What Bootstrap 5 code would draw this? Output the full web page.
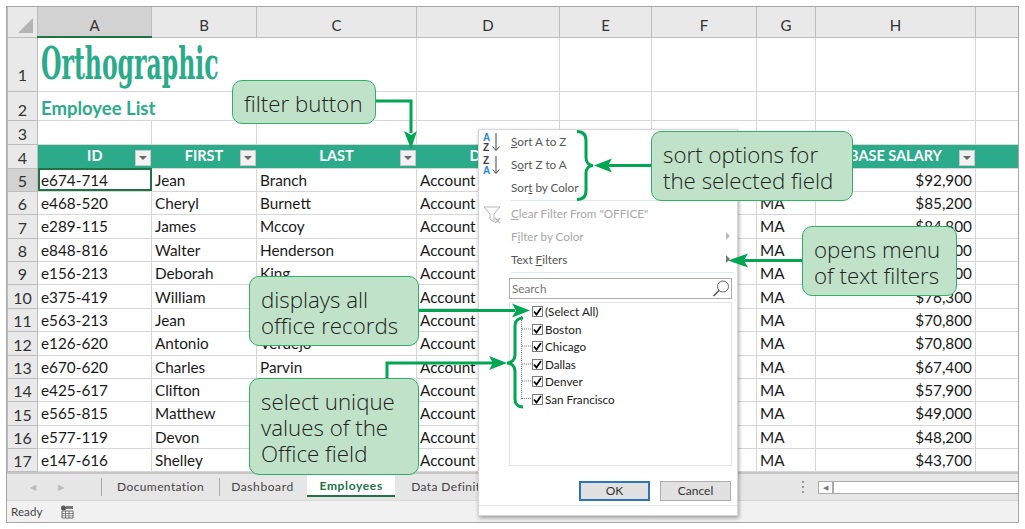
<!DOCTYPE html>
<html lang="en">
<head>
    <meta charset="UTF-8">
    <title>Employee List</title>
    <link href="https://cdn.jsdelivr.net/npm/bootstrap@5.3.0/dist/css/bootstrap.min.css" rel="stylesheet">
    <style>
        body { background: #fff; overflow: hidden; }
        .stage { width: 1025px; height: 529px; padding: 6px; font-family: Lato, "Open Sans", sans-serif; }
        .xl-frame { width: 1013px; height: 517px; border: 1px solid #a6a6a6; }
        .sheet-wrap { height: 465px; }
        .sheet { table-layout: fixed; width: 1011px; border-collapse: collapse; font-size: 15.3px; color: #1a1a1a; }
        .sheet td, .sheet th { border: 1px solid #d6d6d6; padding: 0 3px; overflow: hidden; white-space: nowrap; font-weight: 400; }
        .col-head th { height: 30px; background: #e9e9e9; text-align: center; color: #333; border-color: #bdbdbd; border-top: 0; font-size: 15px; padding-top: 6px; line-height: 20px; }
        .col-head th.on { background: #d2d2d2; border-bottom: 2px solid #217346; }
        .rh { background: #e9e9e9 !important; text-align: center !important; border-color: #bdbdbd !important; color: #333; font-size: 16px; padding: 0 !important; vertical-align: bottom; line-height: 20px; }
        .rh.on { background: #d2d2d2 !important; }
        .corner { position: relative; }
        .corner::after { content: ""; position: absolute; right: 4px; bottom: 4px; border-style: solid; border-width: 0 0 15px 15px; border-color: transparent transparent #b4b4b4 transparent; }
        .r1 td { height: 54px; }
        .r1 td.rh { padding-bottom: 6px !important; }
        .r2 td { height: 29px; }
        .r3 td { height: 24px; }
        .r4 td { height: 24px; background: #2bab8a; color: #fff; font-weight: 700; font-size: 14.5px; text-align: center; border: 0; border-top: 1px solid #f4a46a; position: relative; line-height: 20px; }
        .r4 td.rh { color: #333; font-weight: 400; font-size: 16px; border: 1px solid #bdbdbd; }
        .rw td { height: 23.38px; line-height: 20px; }
        .sel-cell { outline: 2px solid #217346; outline-offset: -2px; }
        .title-big { display: inline-block; font-family: "DejaVu Serif", serif; font-weight: 700; font-size: 44px; line-height: 50px; color: #2bab8a; transform: scaleX(.535); transform-origin: left center; }
        .sheet td.title-sub { font-weight: 700; font-size: 18.5px; color: #2bab8a; line-height: 24px; padding-top: 4px; }
        .flt-btn { position: absolute; right: 1px; top: 5px; width: 16px; height: 16px; background: #f2f2f2; border: 1px solid #c9c9c9; }
        .flt-btn::after { content: ""; position: absolute; left: 3px; top: 5px; border-style: solid; border-width: 4px 4px 0 4px; border-color: #666 transparent transparent transparent; }
        .tab-bar { height: 28px; background: #e6e6e6; border-top: 2px solid #c6c6c6; font-size: 12px; letter-spacing: .4px; color: #444; }
        .tab-nav { width: 94px; color: #bbb; font-size: 8px; gap: 22px; padding-left: 23px; }
        .tab-sep { width: 1px; height: 18px; background: #a8a8a8; }
        .tab-doc { padding: 0 15px; white-space: nowrap; }
        .tab-dash { width: 87px; padding-left: 11px; letter-spacing: .6px; white-space: nowrap; }
        .tab-on { background: #fff; color: #217346; font-weight: 700; width: 88px; text-align: center; letter-spacing: .65px; height: 23px; line-height: 24px; border-bottom: 2px solid #217346; align-self: flex-start; white-space: nowrap; }
        .tab-next { padding-left: 16px; white-space: nowrap; }
        .split-dots { position: absolute; left: 802px; top: 481px; width: 2px; height: 12px; background: repeating-linear-gradient(#999 0 2px, transparent 2px 5px); }
        .h-scroll { position: absolute; left: 818px; top: 481px; width: 200px; height: 13px; background: #fff; border: 1px solid #ababab; border-right: 0; }
        .h-scroll span { display: block; width: 15px; height: 100%; border-right: 2px solid #ababab; color: #777; font-size: 7px; line-height: 11px; text-align: center; }
        .status-bar { height: 22px; background: #f1f1f1; border-top: 1px solid #d8d8d8; font-size: 11.5px; letter-spacing: .1px; color: #444; padding-left: 4px; gap: 17px; }
        .flt-menu { position: absolute; left: 478px; top: 129px; width: 260px; height: 387px; background: #fff; border: 1px solid #d6d6d6; box-shadow: 1px 2px 4px rgba(0,0,0,.35); font-size: 11.7px; color: #555; z-index: 2; }
        .mi { height: 23px; line-height: 22px; padding-left: 32px; position: relative; white-space: nowrap; }
        .mi.off { color: #a8a8a8; }
        .mi svg { position: absolute; left: 3px; top: 2px; }
        .mi-caret { position: absolute; right: 7px; top: 7px; border-style: solid; border-width: 4px 0 4px 4px; border-color: transparent transparent transparent #777; }
        .mi-caret.off { border-left-color: #bbb; }
        .mi-sep { height: 1px; background: #dfe8ee; margin: 1px 3px 1px 32px; }
        .srch { margin: 5px 5px 0 30px; height: 21px; border: 1px solid #ababab; color: #777; line-height: 18px; padding-left: 2px; }
        .chk-list { margin: 3px 5px 0 30px; height: 164px; border: 1px solid #e3e3e3; color: #222; }
        .chk-row { height: 17.5px; line-height: 16.5px; padding-left: 22px; gap: 2px; }
        .chk-row:first-child { height: 16px; margin-bottom: 1.25px; }
        .chk-box { width: 11px; height: 11px; border: 1px solid #7a7a7a; background: #fff; flex: none; }
        .btn-row { margin: 15px 6px 0 0; gap: 10px; }
        .xl-btn { width: 71px; height: 20px; background: #e1e1e1; border: 1px solid #adadad; color: #333; font-size: 12px; line-height: 18px; text-align: center; }
        .xl-btn.dflt { border: 2px solid #2e75b5; line-height: 16px; }
        .menu-foot { position: absolute; left: 0; right: 0; bottom: 0; height: 10px; border-top: 1px solid #dfe8ee; }
        .callout { position: absolute; background: #c0e2c8; border: 1px solid #2fae67; border-radius: 10px; color: #222; font-family: "Open Sans", sans-serif; font-weight: 300; font-size: 22.3px; line-height: 26px; padding: 3px 11px 0; z-index: 4; }
        .arrows { position: absolute; left: 0; top: 0; z-index: 3; pointer-events: none; }
    </style>
</head>
<body>
    <div class="stage position-relative">
        <div class="xl-frame d-flex flex-column">
            <div class="sheet-wrap overflow-hidden">
                <table class="sheet">
                    <colgroup>
                        <col style="width:30px"><col style="width:114px"><col style="width:105px"><col style="width:160px"><col style="width:143px"><col style="width:92px"><col style="width:105px"><col style="width:59px"><col style="width:160px"><col style="width:43px">
                    </colgroup>
                    <thead>
                        <tr class="col-head">
                            <th class="corner"></th><th class="on">A</th><th>B</th><th>C</th><th>D</th><th>E</th><th>F</th><th>G</th><th>H</th><th></th>
                        </tr>
                    </thead>
                    <tbody id="sheetBody">
                        <tr class="r1"><td class="rh">1</td><td colspan="3"><span class="title-big">Orthographic</span></td><td></td><td></td><td></td><td></td><td></td><td></td></tr>
                        <tr class="r2"><td class="rh">2</td><td colspan="3" class="title-sub">Employee List</td><td></td><td></td><td></td><td></td><td></td><td></td></tr>
                        <tr class="r3"><td class="rh">3</td><td></td><td></td><td></td><td></td><td></td><td></td><td></td><td></td><td></td></tr>
                        <tr class="r4"><td class="rh">4</td><td>ID<i class="flt-btn"></i></td><td>FIRST<i class="flt-btn"></i></td><td>LAST<i class="flt-btn"></i></td><td>DEPT<i class="flt-btn"></i></td><td></td><td></td><td></td><td>BASE SALARY<i class="flt-btn"></i></td><td></td></tr>
                    </tbody>
                </table>
            </div>
            <div class="tab-bar d-flex align-items-center">
                <div class="tab-nav d-flex"><span>&#9664;</span><span>&#9654;</span></div>
                <div class="tab-sep"></div>
                <div class="tab-doc">Documentation</div>
                <div class="tab-sep"></div>
                <div class="tab-dash">Dashboard</div>
                <div class="tab-on">Employees</div>
                <div class="tab-next">Data Definit</div>
            </div>
            <div class="status-bar d-flex align-items-center">
                <span>Ready</span>
                <svg width="14" height="14" viewBox="0 0 14 14"><circle cx="3.500" cy="3" r="2.500" fill="#555"/><rect x="6" y="1" width="7" height="3" fill="#777"/><path d="M2 6h11v7H2z" fill="#fff" stroke="#666"/><path d="M2 8.500h11M2 10.800h11M5.500 6v7M9 6v7" stroke="#666" stroke-width=".8"/></svg>
            </div>
        </div>
        <div class="split-dots"></div>
        <div class="h-scroll"><span>&#9664;</span></div>

        <div class="flt-menu">
            <div class="mi"><svg width="24" height="22" viewBox="0 0 24 22"><text x="1" y="9" font-size="10" font-weight="700" fill="#2b88d8" font-family="Liberation Sans">A</text><text x="1" y="19" font-size="10" font-weight="700" fill="#444" font-family="Liberation Sans">Z</text><path d="M14 1v17M10.500 14.500l3.500 4 3.500-4" fill="none" stroke="#444"/></svg><u>S</u>ort A to Z</div>
            <div class="mi"><svg width="24" height="22" viewBox="0 0 24 22"><text x="1" y="9" font-size="10" font-weight="700" fill="#444" font-family="Liberation Sans">Z</text><text x="1" y="19" font-size="10" font-weight="700" fill="#2b88d8" font-family="Liberation Sans">A</text><path d="M14 1v17M10.500 14.500l3.500 4 3.500-4" fill="none" stroke="#444"/></svg>S<u>o</u>rt Z to A</div>
            <div class="mi">Sor<u>t</u> by Color</div>
            <div class="mi-sep"></div>
            <div class="mi off"><svg width="24" height="22" viewBox="0 0 24 22"><path d="M2 3h16l-6 7v8l-4-3v-5z" fill="none" stroke="#b5b5b5"/><path d="M13 14l5 5M18 14l-5 5" stroke="#b5b5b5" stroke-width="1.200"/></svg><u>C</u>lear Filter From "OFFICE"</div>
            <div class="mi off">F<u>i</u>lter by Color<i class="mi-caret off"></i></div>
            <div class="mi">Text <u>F</u>ilters<i class="mi-caret"></i></div>
            <div class="mi-sep"></div>
            <div class="srch position-relative">Search
                <svg class="position-absolute top-0 end-0" width="20" height="19" viewBox="0 0 20 19"><circle cx="12" cy="7.500" r="5.500" fill="none" stroke="#666"/><path d="M8 11.500l-5.500 5.500" stroke="#555" stroke-width="1.600"/></svg>
            </div>
            <div class="chk-list" id="chkList"></div>
            <div class="btn-row d-flex justify-content-end">
                <div class="xl-btn dflt">OK</div>
                <div class="xl-btn">Cancel</div>
            </div>
            <div class="menu-foot"></div>
        </div>

        <svg class="arrows" width="1025" height="529" viewBox="0 0 1025 529">
            <g stroke="#777" stroke-dasharray="1 1" fill="none">
                <path d="M521.500 316v83M522 329h10M522 346h10M522 364h10M522 381h10M522 398.500h10"/>
            </g>
            <g fill="none" stroke="#00a651" stroke-width="3">
                <path d="M376 101h35v32"/>
                <path d="M651 165.500h-45"/>
                <path d="M802 260.500h-60"/>
                <path d="M419 310.500h96"/>
                <path d="M387 378v-15h108"/>
                <path d="M577 131.500c6 0 9 3 9 9v17c0 5 3 8 7 8-4 0-7 3-7 8v17c0 6-3 9-9 9"/>
                <path d="M523 318c-5 0-8 3-8 8v29c0 5-4 8-8 8 4 0 8 3 8 8v28c0 5 3 8 8 8"/>
            </g>
            <g fill="#00a651">
                <path d="M411 149l-7-18 7 4 6-4z"/>
                <path d="M594 165.500l18-7-4 7 4 7z"/>
                <path d="M728 260.500l20-7-4 7 4 7z"/>
                <path d="M530 310.500l-18-7 4 7-4 7z"/>
                <path d="M507 363l-18-7 4 7-4 7z"/>
            </g>
        </svg>

        <div class="callout d-flex align-items-center" style="left:232px;top:80px;width:144px;height:44px">filter button</div>
        <div class="callout d-flex align-items-center" style="left:651px;top:131px;width:202px;height:70px">sort options for<br>the selected field</div>
        <div class="callout d-flex align-items-center" style="left:802px;top:226px;width:155px;height:70px">opens menu<br>of text filters</div>
        <div class="callout d-flex align-items-center" style="left:249px;top:276px;width:170px;height:70px">displays all<br>office records</div>
        <div class="callout d-flex align-items-center" style="left:249px;top:378px;width:170px;height:97px">select unique<br>values of the<br>Office field</div>
    </div>

    <script src="https://cdn.jsdelivr.net/npm/bootstrap@5.3.0/dist/js/bootstrap.bundle.min.js"></script>
    <script>
        // row no, id, first, last, salary (last names under the callouts are left blank)
        const employees = [
            [5, "e674-714", "Jean", "Branch", "$92,900"],
            [6, "e468-520", "Cheryl", "Burnett", "$85,200"],
            [7, "e289-115", "James", "Mccoy", "$84,800"],
            [8, "e848-816", "Walter", "Henderson", "$82,900"],
            [9, "e156-213", "Deborah", "King", "$80,100"],
            [10, "e375-419", "William", "", "$76,300"],
            [11, "e563-213", "Jean", "", "$70,800"],
            [12, "e126-620", "Antonio", "Verdejo", "$70,800"],
            [13, "e670-620", "Charles", "Parvin", "$67,400"],
            [14, "e425-617", "Clifton", "", "$57,900"],
            [15, "e565-815", "Matthew", "", "$49,000"],
            [16, "e577-119", "Devon", "", "$48,200"],
            [17, "e147-616", "Shelley", "", "$43,700"]
        ];
        const body = document.getElementById("sheetBody");
        employees.forEach(e => {
            body.innerHTML += `
                <tr class="rw">
                    <td class="rh ${e[0] === 5 ? "on" : ""}">${e[0]}</td>
                    <td class="${e[0] === 5 ? "sel-cell" : ""}">${e[1]}</td>
                    <td>${e[2]}</td>
                    <td>${e[3]}</td>
                    <td>Account</td>
                    <td></td>
                    <td></td>
                    <td>MA</td>
                    <td class="text-end">${e[4]}</td>
                    <td></td>
                </tr>`;
        });

        const offices = ["(Select All)", "Boston", "Chicago", "Dallas", "Denver", "San Francisco"];
        document.getElementById("chkList").innerHTML = offices.map(o => `
            <div class="chk-row d-flex align-items-center">
                <span class="chk-box d-flex"><svg width="9" height="9" viewBox="0 0 9 9"><path d="M1 4.500l2.500 3L8 1" fill="none" stroke="#000" stroke-width="1.800"/></svg></span>
                <span>${o}</span>
            </div>`).join("");
    </script>
</body>
</html>
